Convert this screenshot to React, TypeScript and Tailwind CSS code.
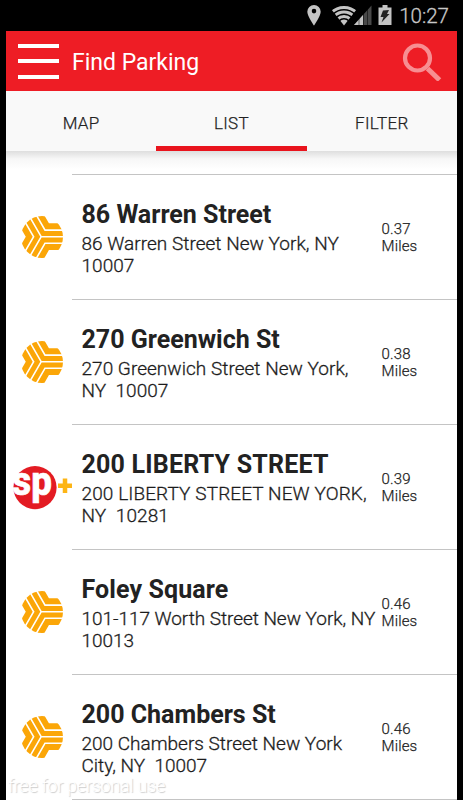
import React from "react";

type Spot = { name: string; lines: [string, string]; miles: string; sp?: boolean; nameClass: string; lineClass: string };

const spots: Spot[] = [
  { name: "86 Warren Street", lines: ["86 Warren Street New York, NY", "10007"], miles: "0.37", nameClass: "tracking-normal", lineClass: "tracking-[0.03px]" },
  { name: "270 Greenwich St", lines: ["270 Greenwich Street New York,", "NY  10007"], miles: "0.38", nameClass: "tracking-normal", lineClass: "tracking-[0.03px]" },
  { name: "200 LIBERTY STREET", lines: ["200 LIBERTY STREET NEW YORK,", "NY  10281"], miles: "0.39", sp: true, nameClass: "tracking-[0.2px]", lineClass: "tracking-[0.1px]" },
  { name: "Foley Square", lines: ["101-117 Worth Street New York, NY", "10013"], miles: "0.46", nameClass: "tracking-[0.1px]", lineClass: "tracking-[-0.04px]" },
  { name: "200 Chambers St", lines: ["200 Chambers Street New York", "City, NY  10007"], miles: "0.46", nameClass: "tracking-normal", lineClass: "tracking-normal" },
];

function ParkingLogo() {
  return (
    <svg className="ml-[15px] h-[42px] w-[42px]" viewBox="-21 -21 42 42">
      <defs>
        <clipPath id="disc"><circle cx="0" cy="0" r="21" /></clipPath>
      </defs>
      <g clipPath="url(#disc)" fill="none" stroke="#fba608">
        {[0, 120, 240].map((a) => (
          <g key={a} transform={`translate(-0.8 -0.3) rotate(${a})`}>
            <path strokeWidth="5" d="M-18.8 -25.98L-3.8 0L-18.8 25.98" />
            <path strokeWidth="6" d="M-27 -25.98L-12 0L-27 25.98" />
          </g>
        ))}
      </g>
    </svg>
  );
}

function SpLogo() {
  return (
    <svg className="ml-[6px] h-[62px] w-[62px]" viewBox="12 456 62 62">
      <circle cx="35" cy="487.6" r="21.6" fill="#e31b23" />
      <text x="12.300" y="494.800" fontSize="40" fontWeight="800" fill="#fff" stroke="#fff" strokeWidth=".7" fontFamily="Roboto, sans-serif" textLength="39.500" lengthAdjust="spacingAndGlyphs">sp</text>
      <path d="M65 478.500V493M58 485.700H72" stroke="#fdb515" strokeWidth="4.500" />
    </svg>
  );
}

export default function App() {
  return (
    <div className="h-[800px] w-[463px] overflow-hidden bg-black pr-[6px] pl-[6px] font-[Roboto,sans-serif]">
      <div className="flex h-[31px] items-center justify-end text-[#c0c0c0]">
        <svg className="h-[31px] w-[90px]" viewBox="305 0 90 31">
          <defs>
            <clipPath id="fan"><path d="M344 25.500L329.500 7V0H358.500V7Z" /></clipPath>
          </defs>
          <path fillRule="evenodd" fill="#c4c4c4" d="M314 5a6.7 6.7 0 0 0-6.7 6.7C307.300 16 314 25.500 314 25.500S320.700 16 320.700 11.700A6.700 6.700 0 0 0 314 5ZM314 8.800a2.300 2.300 0 1 1 0 4.600a2.300 2.300 0 0 1 0-4.600Z" />
          <g clipPath="url(#fan)" fill="none" stroke="#c4c4c4" strokeWidth="3">
            <circle cx="344" cy="25.500" r="18" />
            <circle cx="344" cy="25.500" r="13.500" />
            <circle cx="344" cy="25.500" r="9" />
            <circle cx="344" cy="25.500" r="3" strokeWidth="6" />
          </g>
          <path d="M354 25L371.500 5.500V25Z" fill="#494949" />
          <path d="M354 25L363 15V25Z" fill="#c4c4c4" />
          <path d="M359 8V25M363.500 6V25M367.500 5V25" stroke="#000" strokeWidth=".5" />
          <path d="M378.500 7.500h4V5h5v2.500h4V25h-13Z" fill="#c4c4c4" />
          <path d="M383 10.500L389 10L387 14H389.500L381.500 22.500L383.500 17H380.500Z" fill="#222" />
        </svg>
        <span className="mr-[8px] ml-[4px] pt-px text-[20.5px] leading-[31px] font-light text-[#c8c8c8] [-webkit-text-stroke:0.3px_#c8c8c8]">10:27</span>
      </div>

      <header className="flex h-[60px] items-center bg-[#ee1d25] text-white">
        <div className="ml-3 flex w-[41px] flex-col gap-[11.5px]">
          <div className="h-[4px] bg-white" />
          <div className="h-[4px] bg-white" />
          <div className="h-[4px] bg-white" />
        </div>
        <h1 className="ml-[13px] grow pt-[4px] text-[23px] leading-[30px]">Find Parking</h1>
        <svg className="mr-[15px] h-[40px] w-[40px]" viewBox="0 0 40 40" fill="none" stroke="#f78e92">
          <circle cx="15.500" cy="17" r="12.500" strokeWidth="4.200" />
          <path d="M25.500 27.500L37.500 39" strokeWidth="5" />
        </svg>
      </header>

      <nav className="grid h-[60px] grid-cols-3 bg-[#f9f9f9] text-center text-[17px] leading-[64px] font-light tracking-[0.35px] text-[#222] [-webkit-text-stroke:0.25px_#222]">
        <div className="h-[60px]">MAP</div>
        <div className="h-[60px] border-b-[5px] border-[#e9141d]">LIST</div>
        <div className="h-[60px]">FILTER</div>
      </nav>

      <main className="h-[649px] bg-white">
        <div className="h-[23px] bg-linear-to-b from-[#dedede] via-[#f7f7f7] via-35% to-white to-80%" />
        {spots.map((s) => (
          <section key={s.name} className="flex h-[125px] items-center">
            <div className="w-[66px] shrink-0">{s.sp ? <SpLogo /> : <ParkingLogo />}</div>
            <div className="flex h-full grow items-center border-t border-[#c4c4c4] pl-[9.5px]">
              <div className="w-[299.5px] pt-[3px] whitespace-pre">
                <h2 className={`mb-[3px] text-[25px] leading-[30px] font-bold text-[#222] ${s.nameClass}`}>{s.name}</h2>
                <p className={`text-[19px] leading-[22px] font-light text-[#1c1c1c] [-webkit-text-stroke:0.3px_#1c1c1c] ${s.lineClass}`}>{s.lines[0]}<br />{s.lines[1]}</p>
              </div>
              <p className="pt-[2px] pl-[0.5px] text-[15px] leading-[17px] font-light tracking-[0.15px] text-[#222] [-webkit-text-stroke:0.25px_#222]">{s.miles}<br />Miles</p>
            </div>
          </section>
        ))}
        <div className="ml-[66px] h-px bg-[#c4c4c4]" />
      </main>
      <p className="absolute top-[775px] left-[8px] text-[18px] leading-[22px] font-light tracking-[-0.25px] text-white [text-shadow:1px_1px_1px_#ccc]">free for personal use</p>
    </div>
  );
}
